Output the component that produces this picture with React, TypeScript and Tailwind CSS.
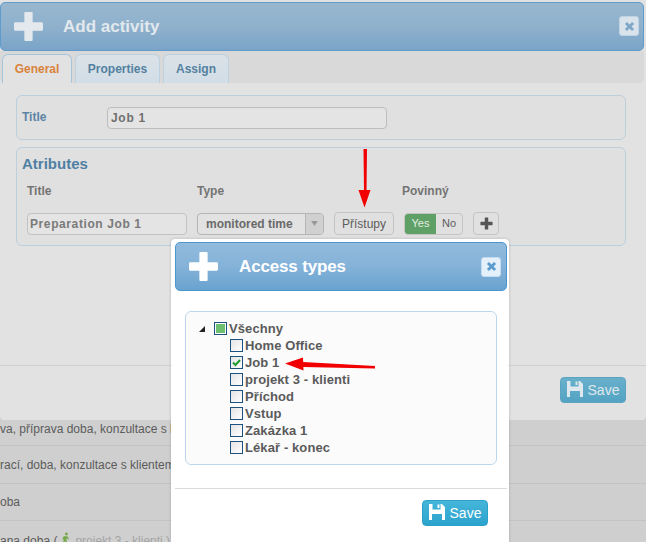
import React from "react";

const font = { fontFamily: '"Liberation Sans", Arial, sans-serif' };

function Plus({ className }: { className: string }) {
  return (
    <svg viewBox="0 0 30 30" className={className} fill="currentColor">
      <path d="M11 2a1 1 0 0 1 1-1h6a1 1 0 0 1 1 1v9h9a1 1 0 0 1 1 1v6a1 1 0 0 1-1 1h-9v9a1 1 0 0 1-1 1h-6a1 1 0 0 1-1-1v-9H2a1 1 0 0 1-1-1v-6a1 1 0 0 1 1-1h9z" />
    </svg>
  );
}

function Cross({ className }: { className: string }) {
  return (
    <svg viewBox="0 0 12 12" className={className} fill="currentColor">
      <path d="M1 3.2 3.2 1 6 3.8 8.8 1 11 3.2 8.2 6 11 8.8 8.8 11 6 8.2 3.2 11 1 8.8 3.800 6z" />
    </svg>
  );
}

function Disk({ className }: { className: string }) {
  return (
    <svg viewBox="0 0 16 16" className={className} fill="currentColor">
      <path d="M0 0h3.500v5.500h8V0h1.500L16 3v13h-3v-6H3v6H0z" />
      <path d="M8.500 .5H10.500V4H8.500z" />
    </svg>
  );
}

function SaveButton({ dim }: { dim?: boolean }) {
  return (
    <button
      className={`flex h-[26px] w-[66px] items-center justify-center gap-[5px] rounded-[4px] border text-[14px] ${
        dim
          ? "border-[#5ba3bf] bg-gradient-to-b from-[#69b0cb] to-[#54a3c4] text-[#dfe8ec]"
          : "border-[#2ba1c9] bg-gradient-to-b from-[#45b5da] to-[#2ba3cd] text-white"
      }`}
    >
      <Disk className="mb-[3px] h-[16px] w-[16px]" />
      <span className="leading-none">Save</span>
    </button>
  );
}

function TreeRow({ label, checked }: { label: string; checked?: boolean }) {
  return (
    <div className="flex h-[17px] items-center gap-[2px] pl-[44px]">
      <span className="relative h-[13px] w-[13px] shrink-0 border border-[#1c5280] bg-gradient-to-br from-[#e4e4e4] to-white">
        {checked && (
          <svg viewBox="0 0 11 11" className="absolute inset-0 h-[11px] w-[11px]" fill="none">
            <path d="M2 5.500 4.500 8 9 3" stroke="#1e9a2c" strokeWidth="2" />
          </svg>
        )}
      </span>
      <span>{label}</span>
    </div>
  );
}

function Tab({ label, active }: { label: string; active?: boolean }) {
  return (
    <div
      className={`flex h-[29px] items-center justify-center rounded-t-[6px] border border-b-0 text-[12px] font-bold ${
        active
          ? "w-[70px] border-[#a5c5dd] bg-[#e2e2e2] text-[#d9823c]"
          : "border-[#bdd0de] bg-gradient-to-b from-[#dbe2e7] to-[#d1dde7] text-[#54809f]"
      } ${label === "Properties" ? "w-[85px]" : ""} ${label === "Assign" ? "w-[66px]" : ""}`}
    >
      {label}
    </div>
  );
}

export default function App() {
  return (
    <div style={font} className="relative h-[542px] w-[646px] overflow-hidden bg-[#cfcfcf]">
      {/* Underlying form */}
      <div className="h-[420px] rounded-b-[4px] bg-[#e2e2e2] pt-[2px]">
        <div className="flex h-[49px] w-[644px] items-center justify-between rounded-[5px] border border-[#5f9ccc] bg-gradient-to-b from-[#98b7cf] via-[#8fb1cc] to-[#7aa4c8] pl-[12px] pr-[4px]">
          <div className="flex items-center">
            <Plus className="h-[31px] w-[31px] text-[#e4e9ed]" />
            <span className="ml-[19px] text-[17px] font-bold text-[#e2e8ec]">Add activity</span>
          </div>
          <div className="mb-[1px] flex h-[20px] w-[20px] items-center justify-center rounded-[3px] border border-[#c0d3e2] bg-[#d8e3ec] text-[#7fa7c8]">
            <Cross className="h-[11px] w-[11px]" />
          </div>
        </div>

        <div className="flex h-[32px] w-[644px] items-end gap-[3px] rounded-b-[5px] bg-[#d9d9d9] pl-[2px]">
          <Tab label="General" active />
          <Tab label="Properties" />
          <Tab label="Assign" />
        </div>

        <div className="pl-[16px] pr-[20px] pt-[12px]">
          <div className="flex h-[45px] items-center rounded-[6px] border border-[#bccfdd] bg-[#e0e0e0] pl-[5px] pt-[1px]">
            <span className="w-[85px] pb-[3px] text-[12px] font-bold text-[#5b84a3]">Title</span>
            <div className="flex h-[22px] w-[280px] items-center rounded-[4px] border border-[#bdbdbd] bg-[#e4e4e4] pl-[3px] text-[12px] font-bold tracking-[0.7px] text-[#707070]">
              Job 1
            </div>
          </div>

          <div className="relative mt-[7px] h-[99px] rounded-[6px] border border-[#bccfdd] bg-[#e0e0e0] pl-[5px] pt-[7px]">
            <div className="text-[15px] leading-[17px] font-bold text-[#4f7fa3]">Atributes</div>
            <div className="mt-[12px] flex text-[12px] leading-[14px] font-bold text-[#747474]">
              <span className="ml-[5px] w-[170px]">Title</span>
              <span className="w-[205px]">Type</span>
              <span className="text-[12px]">Povinný</span>
            </div>
            <div className="mt-[14px] flex items-center">
              <div className="ml-[5px] flex h-[22px] w-[160px] items-center rounded-[4px] border border-[#c2c2c2] bg-[#e4e4e4] pl-[2px] text-[12px] font-bold tracking-[0.6px] text-[#7a7a7a]">
                Preparation Job 1
              </div>
              <div className="ml-[10px] flex h-[22px] w-[127px] items-stretch overflow-hidden rounded-[4px] border border-[#b5b5b5] bg-[#e2e2e2] text-[#6a6a6a]">
                <span className="flex flex-1 items-center pl-[8px] text-[12px] font-bold">monitored time</span>
                <span className="flex w-[18px] items-center justify-center border-l border-[#b5b5b5] bg-[#d0d0d0] text-[#999]">
                  <svg viewBox="0 0 8 6" className="h-[5px] w-[7px]" fill="currentColor">
                    <path d="M0 0h8L4 6z" />
                  </svg>
                </span>
              </div>
              <div className="ml-[10px] flex h-[23px] w-[60px] items-center justify-center rounded-[4px] border border-[#c4c4c4] text-[12px] text-[#5c5c5c]">
                Přístupy
              </div>
              <div className="ml-[10px] flex h-[22px] w-[59px] overflow-hidden rounded-[4px] border border-[#c4c4c4] text-[11px]">
                <span className="flex w-[31px] items-center justify-center bg-[#5fa066] text-[#e3ece4]">Yes</span>
                <span className="flex flex-1 items-center justify-center text-[#5c5c5c]">No</span>
              </div>
              <div className="ml-[10px] flex h-[23px] w-[26px] items-center justify-center rounded-[4px] border border-[#c4c4c4] text-[#555]">
                <Plus className="h-[13px] w-[13px]" />
              </div>
            </div>
          </div>
        </div>

        <div className="mt-[119px] border-t border-[#d0d0d0] pr-[20px] pt-[11px]">
          <div className="flex justify-end">
            <SaveButton dim />
          </div>
        </div>
      </div>

      {/* Rows behind the modal */}
      <div className="text-[12px] text-[#5c5c5c]">
        <div className="h-[26px] overflow-hidden border-b border-[#c3c3c3] whitespace-nowrap">
          va, příprava doba, konzultace s klientem
        </div>
        <div className="flex h-[38px] items-center overflow-hidden border-b border-[#c3c3c3] whitespace-nowrap">
          rací, doba, konzultace s klientem
        </div>
        <div className="flex h-[37px] items-center overflow-hidden border-b border-[#c3c3c3] whitespace-nowrap">
          oba
        </div>
        <div className="flex h-[21px] items-start overflow-hidden pt-[11px] whitespace-nowrap">
          <span>ana doba (</span>
          <svg viewBox="0 0 10 14" className="mx-[4px] h-[13px] w-[9px] shrink-0" fill="#76a84a">
            <circle cx="6" cy="2" r="1.600" />
            <path d="M3 4.500h4l2 3-1 .6L6.500 6.500 6 9l2 4.500-1.300.4L4.500 9.800 2.500 14 1 13.500 4 7l-1 1.500-1.500-.6z" />
          </svg>
          <span className="ml-[1px] text-[#a4a4a4]">projekt 3 - klienti )</span>
        </div>
      </div>

      {/* Access types dialog */}
      <div className="absolute left-[171px] top-[239px] h-[310px] w-[338px] rounded-[4px] bg-white px-[4px] pt-[3px] shadow-[0_0_3px_rgba(0,0,0,0.2)]">
        <div className="flex h-[49px] w-[332px] items-center justify-between rounded-[5px] border border-[#4a96d0] bg-gradient-to-b from-[#92bbdd] via-[#84b2d8] to-[#69a3d0] pl-[12px] pr-[5px]">
          <div className="flex items-center">
            <Plus className="h-[31px] w-[31px] text-white" />
            <span className="ml-[20px] text-[17px] font-bold tracking-[-0.15px] text-white">Access types</span>
          </div>
          <div className="flex h-[20px] w-[20px] items-center justify-center rounded-[3px] border border-[#c4dcef] bg-[#e4f0fa] text-[#5d9bcf]">
            <Cross className="h-[11px] w-[11px]" />
          </div>
        </div>

        <div className="ml-[10px] mt-[20px] h-[154px] w-[312px] rounded-[6px] border border-[#bdd8ee] bg-[#fbfbfb] pt-[8px] text-[13px] font-bold tracking-[0.1px] text-[#5a5a5a]">
          <div className="flex h-[17px] items-center pl-[13px]">
            <svg viewBox="0 0 6 6" className="h-[6px] w-[6px]" fill="#222">
              <path d="M6 0v6H0z" />
            </svg>
            <span className="ml-[9px] flex h-[13px] w-[13px] shrink-0 items-center justify-center border border-[#1c5280] bg-[#fff]">
              <span className="h-[9px] w-[9px] bg-[#6cc070]" />
            </span>
            <span className="ml-[2px]">Všechny</span>
          </div>
          <TreeRow label="Home Office" />
          <TreeRow label="Job 1" checked />
          <TreeRow label="projekt 3 - klienti" />
          <TreeRow label="Příchod" />
          <TreeRow label="Vstup" />
          <TreeRow label="Zakázka 1" />
          <TreeRow label="Lékař - konec" />
        </div>

        <div className="mt-[23px] flex w-[332px] justify-end border-t border-[#dcdcdc] pr-[19px] pt-[11px]">
          <SaveButton />
        </div>
      </div>

      {/* Annotation arrows */}
      <svg viewBox="0 0 646 542" className="pointer-events-none absolute inset-0 h-[542px] w-[646px]">
        <path d="M363.500 149h3.500l-.5 42h-2.500z" fill="#f20000" />
        <path d="M358.500 190h12l-6 17.500z" fill="#f20000" />
        <path d="M375 366v2.500l-72 -1.500v-5z" fill="#f20000" />
        <path d="M285 363.500l18-6 .5 13z" fill="#f20000" />
      </svg>
    </div>
  );
}
